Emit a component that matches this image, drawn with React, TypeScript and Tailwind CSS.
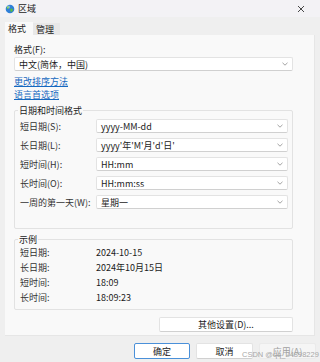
import React from 'react';

const font = { fontFamily: '"Noto Sans CJK SC", "Noto Sans", sans-serif' };

function Chevron() {
  return (
    <svg width="6" height="4" viewBox="0 0 6 4" className="shrink-0">
      <path d="M0.5 0.8 L3 3.2 L5.5 0.8" fill="none" stroke="#8a8a8a" strokeWidth="0.8" />
    </svg>
  );
}

function Select({ value, className }: { value: string; className?: string }) {
  return (
    <div
      className={`h-[14px] flex items-center justify-between bg-white border border-[#e3e3e3] border-b-[#d0d0d0] rounded-[2px] pl-[4px] pr-[4px] ${className ?? ''}`}
    >
      <span className="text-[9px] leading-[11px] text-[#1b1b1b]">{value}</span>
      <Chevron />
    </div>
  );
}

function Group({ title, children, className }: { title: string; children: React.ReactNode; className?: string }) {
  return (
    <div className={`relative border border-[#e2e2e2] rounded-[2px] ${className ?? ''}`}>
      <span className="absolute -top-[6px] left-[3px] px-[1px] bg-[#f9f9f9] text-[9px] leading-[11px] text-[#1b1b1b]">
        {title}
      </span>
      {children}
    </div>
  );
}

const formatRows = [
  ['短日期(S):', 'yyyy-MM-dd'],
  ['长日期(L):', "yyyy'年'M'月'd'日'"],
  ['短时间(H):', 'HH:mm'],
  ['长时间(O):', 'HH:mm:ss'],
  ['一周的第一天(W):', '星期一'],
];

const exampleRows = [
  ['短日期:', '2024-10-15'],
  ['长日期:', '2024年10月15日'],
  ['短时间:', '18:09'],
  ['长时间:', '18:09:23'],
];

export default function App() {
  return (
    <div className="relative w-[320px] h-[362px] bg-[#efefef] flex flex-col overflow-hidden text-[#1b1b1b]" style={font}>
      {/* title bar */}
      <div className="h-[17px] bg-[#f3f2f5] flex items-center pl-[5px] pr-[15px]">
        <svg width="10" height="10" viewBox="0 0 10 10">
          <circle cx="5" cy="5" r="4.3" fill="#2f7fd8" />
          <path d="M2.2 2.6 C3.4 1.6 4.6 2.4 4.2 3.6 C3.8 4.6 2.6 4.4 2.4 5.6 C1.6 4.8 1.6 3.4 2.2 2.6Z" fill="#5cbf3a" />
          <path d="M5.6 4.6 C6.8 4.2 8.2 5 7.8 6.4 C7.2 7.8 5.8 8.2 5.4 7.2 C5.8 6.4 5 5.2 5.6 4.6Z" fill="#5cbf3a" />
          <circle cx="3.6" cy="3" r="1.6" fill="#ffffff" opacity="0.35" />
        </svg>
        <span className="ml-[3px] text-[9px] leading-[11px]">区域</span>
        <div className="flex-1" />
        <svg width="8" height="8" viewBox="0 0 8 8">
          <path d="M1 1 L7 7 M7 1 L1 7" stroke="#333" strokeWidth="0.9" />
        </svg>
      </div>

      {/* tabs */}
      <div className="mt-[5px] px-[5px] flex items-end h-[13px]">
        <div className="h-[13px] w-[28px] bg-[#f9f9f9] flex items-center pl-[3px]">
          <span className="text-[9px] leading-[11px]">格式</span>
        </div>
        <div className="h-[12px] w-[27px] bg-[#e8e8e8] flex items-center pl-[3px]">
          <span className="text-[9px] leading-[11px]">管理</span>
        </div>
      </div>

      {/* panel */}
      <div className="mx-[5px] h-[301px] bg-[#f9f9f9] border-r border-b border-[#e6e6e6] flex flex-col pl-[9px] pr-[21px]">
        <div className="mt-[9px] h-[11px] text-[9px] leading-[11px]">格式(F):</div>
        <Select value="中文(简体，中国)" className="mt-[2px]" />
        <div className="mt-[5px] h-[11px] text-[9px] leading-[11px] text-[#1568c0] underline">更改排序方法</div>
        <div className="mt-[2px] h-[11px] text-[9px] leading-[11px] text-[#1568c0] underline">语言首选项</div>

        <Group title="日期和时间格式" className="mt-[10px] h-[119px] pt-[8px] pl-[5px] pr-[4px]">
          <div className="flex flex-col gap-[5px]">
            {formatRows.map(([label, value]) => (
              <div key={label} className="flex items-center">
                <span className="w-[76px] text-[9px] leading-[11px] text-[#333]">{label}</span>
                <Select value={value} className="flex-1" />
              </div>
            ))}
          </div>
        </Group>

        <Group title="示例" className="mt-[10px] h-[71px] pt-[5px] pl-[5px]">
          <div className="flex flex-col">
            {exampleRows.map(([label, value]) => (
              <div key={label} className="h-[15px] flex items-center">
                <span className="w-[76px] text-[9px] leading-[11px] text-[#333]">{label}</span>
                <span className="text-[9px] leading-[11px]">{value}</span>
              </div>
            ))}
          </div>
        </Group>

        <div className="mt-[7px] flex justify-end">
          <div className="w-[134px] h-[15px] bg-white border border-[#e3e3e3] border-b-[#d0d0d0] rounded-[2px] flex items-center justify-center">
            <span className="text-[9px] leading-[11px]">其他设置(D)...</span>
          </div>
        </div>
      </div>

      {/* dialog buttons */}
      <div className="mt-[7px] flex justify-end gap-[6px] pr-[4px]">
        <div className="w-[56px] h-[16px] bg-white border border-[#4a90d9] rounded-[2px] flex items-center justify-center">
          <span className="text-[9px] leading-[11px]">确定</span>
        </div>
        <div className="w-[57px] h-[16px] bg-white border border-[#e3e3e3] border-b-[#d0d0d0] rounded-[2px] flex items-center justify-center">
          <span className="text-[9px] leading-[11px]">取消</span>
        </div>
        <div className="w-[57px] h-[16px] bg-[#f5f5f5] border border-[#eaeaea] rounded-[2px] flex items-center justify-center">
          <span className="text-[9px] leading-[11px] text-[#a0a0a0]">应用(A)</span>
        </div>
      </div>

      <span
        className="absolute left-[242px] top-[350px] whitespace-nowrap text-[7.5px] leading-[10px] text-[#a8a8a8]"
        style={{ fontFamily: '"Liberation Sans", Arial, sans-serif' }}
      >
        CSDN @qq_24898229
      </span>
    </div>
  );
}
